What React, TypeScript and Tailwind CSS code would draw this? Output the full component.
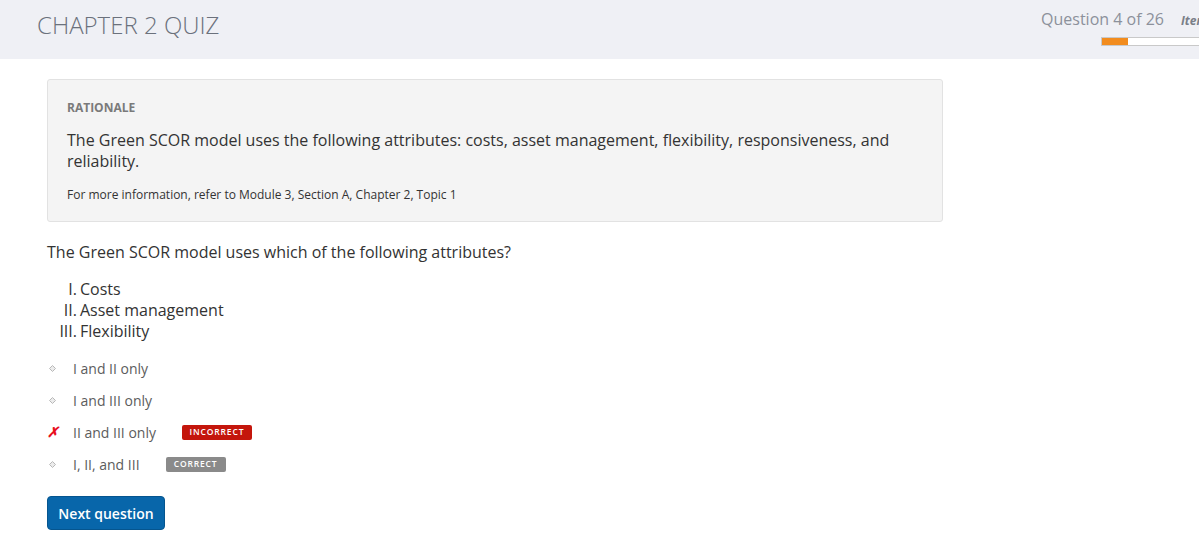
import React from 'react';

const FONT = { fontFamily: '"Open Sans", "Noto Sans", sans-serif' };

const STATEMENTS = [
  { num: 'I.', text: 'Costs' },
  { num: 'II.', text: 'Asset management' },
  { num: 'III.', text: 'Flexibility' },
];

type Option = {
  label: string;
  status?: 'incorrect' | 'correct';
};

const OPTIONS: Option[] = [
  { label: 'I and II only' },
  { label: 'I and III only' },
  { label: 'II and III only', status: 'incorrect' },
  { label: 'I, II, and III', status: 'correct' },
];

function Header() {
  return (
    <header className="flex h-[59px] justify-between bg-[#eff0f5]">
      <h1 className="pl-[37px] pt-[10px] text-[24px] font-light leading-[30px] text-[#6b717c]">
        CHAPTER 2 QUIZ
      </h1>

      <div className="flex flex-col items-end pt-[8px]">
        <div className="flex items-baseline whitespace-nowrap">
          <span className="text-[16px] leading-[22px] text-[#8c919b]">
            Question 4 of 26
          </span>
          <span className="ml-[17px] w-[18px] overflow-hidden text-[12px] font-bold italic text-[#7a7f88]">
            Item
          </span>
        </div>
        <div className="mt-[7px] h-[9px] w-[98px] border border-r-0 border-[#c9c9c9] bg-white">
          <div className="h-full w-[26px] bg-[#f28c1e]" />
        </div>
      </div>
    </header>
  );
}

function Rationale() {
  return (
    <section className="w-[896px] rounded-[3px] border border-[#e2e2e2] bg-[#f4f4f4] px-[19px] pb-[18px] pt-[20px]">
      <p className="text-[12px] font-bold leading-[16px] text-[#7a7a7a]">
        RATIONALE
      </p>
      <p className="mt-[14px] text-[16px] leading-[21px] text-[#333]">
        The Green SCOR model uses the following attributes: costs, asset management, flexibility, responsiveness, and reliability.
      </p>
      <p className="mt-[15px] text-[12px] leading-[16px] text-[#333]">
        For more information, refer to Module 3, Section A, Chapter 2, Topic 1
      </p>
    </section>
  );
}

function Marker({ status }: { status?: Option['status'] }) {
  if (status === 'incorrect') {
    return (
      <span className="w-[26px] text-[14px] font-bold italic leading-none text-[#e8101e]">
        ✗
      </span>
    );
  }
  return (
    <span className="flex w-[26px] pl-[2px]">
      <svg width="7" height="7" viewBox="0 0 7 7">
        <path d="M3.5 0.5 L6.5 3.5 L3.5 6.5 L0.5 3.5 Z" fill="#ececec" stroke="#b8b8b8" strokeWidth="1" />
      </svg>
    </span>
  );
}

function Badge({ status }: { status: 'incorrect' | 'correct' }) {
  const incorrect = status === 'incorrect';
  return (
    <span
      className={`ml-[26px] flex h-[15px] items-center justify-center rounded-[2px] text-[8.5px] font-semibold tracking-[0.1em] text-white ${
        incorrect ? 'w-[70px] bg-[#c4160c]' : 'w-[60px] bg-[#8a8a8a]'
      }`}
    >
      {incorrect ? 'INCORRECT' : 'CORRECT'}
    </span>
  );
}

export default function App() {
  return (
    <div className="min-h-[549px] bg-white" style={FONT}>
      <Header />

      <main className="px-[47px] pt-[20px]">
        <Rationale />

        <p className="mt-[19px] text-[16px] leading-[22px] text-[#333]">
          The Green SCOR model uses which of the following attributes?
        </p>

        <div className="mt-[16px] text-[16px] leading-[21px] text-[#333]">
          {STATEMENTS.map((s) => (
            <div key={s.num} className="flex">
              <span className="w-[30px] text-right">{s.num}</span>
              <span className="ml-[3px]">{s.text}</span>
            </div>
          ))}
        </div>

        <ul className="mt-[10px]">
          {OPTIONS.map((o) => (
            <li key={o.label} className="flex h-[32px] items-center">
              <Marker status={o.status} />
              <span className="text-[14px] text-[#5c5c5c]">{o.label}</span>
              {o.status && <Badge status={o.status} />}
            </li>
          ))}
        </ul>

        <button
          type="button"
          className="mt-[16px] h-[34px] w-[118px] rounded-[4px] border border-[#05558f] bg-[#0866aa] text-[14px] font-semibold text-white"
        >
          Next question
        </button>
      </main>
    </div>
  );
}
